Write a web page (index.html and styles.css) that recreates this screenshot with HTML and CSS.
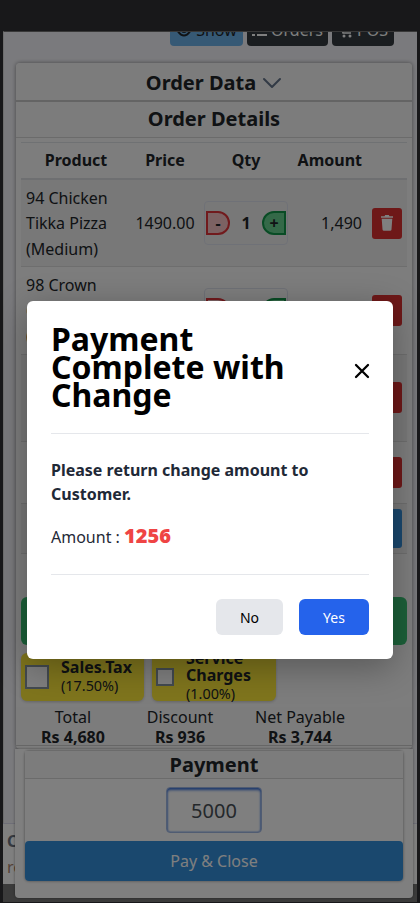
FILE: index.html
```
<!DOCTYPE html>
<html lang="en">
<head>
<meta charset="utf-8">
<title>Order</title>
<link rel="stylesheet" href="styles.css">
</head>
<body>
<div class="screen">
  <div class="backdrop">
    <div class="topbar"></div>
    <div class="canvas"></div>
    <div class="site-footer"><b>C</b><span>re</span></div>
    <div class="base"></div>
  </div>

  <main class="page">
    <nav class="actions">
      <span class="btn show"><svg width="16" height="16" viewBox="0 0 16 16"><path d="M1 8q7-11 14 0q-7 11-14 0z" fill="none" stroke="currentColor" stroke-width="2"/><circle cx="8" cy="8" r="3"/></svg>Show</span>
      <span class="btn orders"><svg width="15" height="16" viewBox="0 0 15 16" fill="none" stroke="currentColor" stroke-width="2"><path d="M5 3h10M5 8h10M5 13h10M0 3h3M0 8h3M0 13h3"/></svg>Orders</span>
      <span class="btn pos"><svg width="15" height="16" viewBox="0 0 15 16"><path d="M0 2h3l2 9h8M4 4h10l-1 5H5" fill="none" stroke="currentColor" stroke-width="1.5"/><circle cx="6" cy="14" r="1.5"/><circle cx="12" cy="14" r="1.5"/></svg>POS</span>
    </nav>

    <section class="card">
      <h2 class="head data">Order Data <svg width="20" height="12" viewBox="0 0 20 12"><path d="M2 2l8 8 8-8" fill="none" stroke="#64748b" stroke-width="2" stroke-linecap="round" stroke-linejoin="round"/></svg></h2>
      <h2 class="head details">Order Details</h2>
      <div class="table">
        <div class="row header"><span>Product</span><span>Price</span><span>Qty</span><span class="right">Amount</span><span></span></div>
        <div class="row item shaded">
          <span class="name">94 Chicken<br>Tikka Pizza<br>(Medium)</span><span class="price">1490.00</span>
          <span class="qty"><i class="minus">-</i><b>1</b><i class="plus">+</i></span>
          <span class="right price">1,490</span>
          <span class="trash"><svg width="14" height="16" viewBox="0 0 14 16" fill="#fff"><path d="M1 1.2h3.5L5.2 0h3.6l.7 1.2H13v1.5H1zM1.7 3.7h10.6l-.8 10.8q-.1 1.3-1.4 1.3H3.9q-1.3 0-1.4-1.3z"/></svg></span>
        </div>
        <div class="row item">
          <span class="name">98 Crown<br>C<br>(</span><span></span>
          <span class="qty"><i class="minus"></i><b></b><i class="plus"></i></span>
          <span></span><span class="trash"></span>
        </div>
        <div class="row item shaded"><span class="name"></span><span></span><span></span><span></span><span class="trash"></span></div>
        <div class="row short"><span></span><span></span><span></span><span></span><span class="trash"></span></div>
        <div class="row add shaded"><span></span><span></span><span></span><span></span><span class="trash blue"></span></div>
      </div>
      <div class="green"></div>
      <div class="charges">
        <label class="charge tax"><i class="box large"></i><span><b>Sales.Tax</b>(17.50%)</span></label>
        <label class="charge service"><i class="box"></i><span><b>Service<br>Charges</b>(1.00%)</span></label>
      </div>
      <div class="totals">
        <div>Total<b>Rs 4,680</b></div><div>Discount<b>Rs 936</b></div><div>Net Payable<b>Rs 3,744</b></div>
      </div>
    </section>

    <section class="sheet">
      <div class="payment">
        <h2>Payment</h2>
        <div class="field"><span>5000</span></div>
        <div class="pay">Pay &amp; Close</div>
      </div>
    </section>
  </main>

  <div class="overlay">
    <div class="modal" role="dialog">
      <header><h1>Payment Complete with Change</h1><svg width="16" height="16" viewBox="0 0 16 16"><path d="M2 2l12 12M14 2L2 14" stroke="#000" stroke-width="2.3" stroke-linecap="round"/></svg></header>
      <div class="message">
        <p class="strong">Please return change amount to Customer.</p>
        <p class="amount">Amount : <b>1256</b></p>
      </div>
      <footer><button class="no">No</button><button class="yes">Yes</button></footer>
    </div>
  </div>
</div>
</body>
</html>
```
FILE: styles.css
```
* { box-sizing: border-box; }
body { margin: 0; background: #000; font: 16px/24px "Noto Sans", sans-serif; color: #212529; }
h1, h2, p { margin: 0; }
i { font-style: normal; }
svg { display: block; flex: none; }
.screen { position: relative; display: grid; width: 420px; height: 903px; overflow: hidden; }
.backdrop, .page { grid-area: 1 / 1; min-width: 0; }
.backdrop { display: flex; flex-direction: column; background: #303034; }
.topbar { height: 31px; flex: none; }
.canvas { height: 792px; margin: 0 3px; background: #f5f5fa; border-top: 1px solid #707070; border-left: 1px solid #ddd; }
.site-footer { height: 61px; margin: 0 3px; background: #fff; border-top: 1px solid #dde; padding: 4px; display: flex; flex-direction: column; color: #a8826e; line-height: 26px; }
.site-footer b { color: #6b7280; }
.base { height: 18px; margin: 0 3px; background: #777; }

.page { z-index: 1; padding-top: 32px; }
.actions { height: 31px; display: flex; gap: 4px; padding-left: 170px; }
.btn { height: 14px; overflow: hidden; display: flex; align-items: flex-end; justify-content: center; gap: 4px; border-radius: 0 0 4px 4px; font-size: 16px; line-height: 24px; padding-bottom: 4px; }
.btn svg { margin-bottom: 4px; fill: currentColor; }
.orders svg { fill: none; }
.show { width: 73px; background: #6cb2eb; }
.orders { width: 81px; background: #343a40; color: #fff; }
.pos { width: 62px; background: #343a40; color: #fff; }

.card { height: 686px; margin: 0 8px 0 16px; background: #fbfbfb; border-radius: 4px; box-shadow: 0 0 4px rgba(0,0,0,.45); display: flex; flex-direction: column; overflow: hidden; }
.head { display: flex; justify-content: center; align-items: center; gap: 6px; font-size: 20px; line-height: 28px; background: #f8f8f8; flex: none; }
.data { height: 39px; padding-top: 2px; border-bottom: 2px solid #c8c8c8; }
.details { height: 36px; padding-bottom: 1px; border-bottom: 1px solid #d7d7d7; }
.table { margin: 4px 5px 0; border-top: 1px solid #dee2e6; flex: none; }
.row { display: grid; grid-template-columns: 110px 68px 94px 74px 40px; align-items: center; text-align: center; border-bottom: 1px solid #dcdcdc; }
.shaded { background: #f0f0f0; }
.header { height: 37px; padding-bottom: 1px; font-weight: 700; border-bottom: 2px solid #dcdfe2; }
.item { height: 87.3px; line-height: 25.6px; }
.short { height: 62px; }
.add { height: 50px; }
.name { text-align: left; padding: 2px 0 0 5px; }
.price { padding-top: 2px; }
.row .right { text-align: right; padding-right: 5px; }
.qty { width: 84px; height: 44px; margin-left: 5px; display: flex; justify-content: space-between; align-items: center; border: 1px solid #dfe3ee; border-radius: 4px; padding: 0 1px; }
.qty i { width: 24px; height: 24px; font-weight: 700; line-height: 20px; }
.qty b { padding-top: 1px; }
.minus { background: #f8c4c6; border: 2px solid #e3343a; border-radius: 0 12px 12px 0; }
.plus { background: #68d391; border: 2px solid #12994a; border-radius: 12px 0 0 12px; }
.trash { width: 30px; height: 31px; margin-left: 5px; border-radius: 3px; background: #dc3030; display: flex; align-items: center; justify-content: center; }
.blue { height: 39px; background: #3490dc; }
.green { height: 48px; margin: 43px 5px 8px; background: #38c172; border-radius: 6px; flex: none; }
.charges { display: flex; gap: 8px; height: 48px; margin: 0 5px; flex: none; }
.charge { display: flex; align-items: center; background: #ffeb3b; border-radius: 6px; box-shadow: 0 1px 3px rgba(0,0,0,.2); padding-left: 4px; font-size: 14.4px; line-height: 20px; }
.charge b { display: block; font-size: 16px; line-height: 17px; }
.tax { width: 123px; gap: 12px; }
.tax span { padding-top: 2px; }
.service { width: 124px; gap: 12px; }
.box { width: 18px; height: 18px; border: 2px solid #8795a1; background: #fff; }
.large { width: 24px; height: 24px; }
.totals { height: 39px; margin-top: 6px; display: grid; grid-template-columns: 114px 100px 140px; text-align: center; line-height: 20px; background: #f8f8f8; border-bottom: 1px solid #ccc; flex: none; }
.totals b { display: block; }

.sheet { height: 149px; margin: 0 7px 0 15px; padding: 2px 10px; background: #fff; border-radius: 0 0 4px 4px; box-shadow: 0 0 3px rgba(0,0,0,.4); }
.payment { height: 130px; border-radius: 4px; box-shadow: 0 0 3px rgba(0,0,0,.45); }
.payment h2 { height: 28px; border-bottom: 1px solid #d7d7d7; font-size: 20px; line-height: 28px; text-align: center; background: #f8f8f8; }
.field { height: 62px; display: flex; justify-content: center; align-items: center; }
.field span { width: 96px; height: 46px; border: 1px solid #a1b9e5; border-radius: 4px; box-shadow: inset 0 2px 3px #3b72d9, inset 0 0 2px #3b72d9; font-size: 20px; line-height: 45px; text-align: center; color: #495057; }
.pay { height: 40px; border-radius: 4px; background: #3490dc; color: #fff; text-align: center; line-height: 40px; }

.overlay { position: absolute; inset: 0; z-index: 2; background: rgba(0,0,0,.5); padding: 301px 27px 0; }
.modal { height: 358px; padding: 24px; background: #fff; border-radius: 6px; box-shadow: 0 8px 35px rgba(0,0,0,.3); }
.modal header { height: 109px; display: flex; justify-content: space-between; align-items: flex-start; border-bottom: 1px solid #e5e7eb; color: #000; }
.modal h1 { width: 250px; font-size: 32px; line-height: 28px; }
.modal header svg { margin: 38px -1px 0 0; }
.message { height: 141px; padding-top: 24px; border-bottom: 1px solid #e5e7eb; color: #1f2937; }
.strong { font-weight: 700; }
.amount { margin-top: 16px; line-height: 28px; }
.amount b { font-size: 20px; font-weight: 900; color: #ef4444; }
.modal footer { display: flex; justify-content: flex-end; gap: 16px; padding-top: 24px; }
button { height: 36px; border: 0; padding: 1px 0 0; border-radius: 6px; font: 14px "Noto Sans", sans-serif; }
.no { width: 67px; background: #e5e7eb; color: #000; }
.yes { width: 70px; background: #2563eb; color: #fff; }
```
